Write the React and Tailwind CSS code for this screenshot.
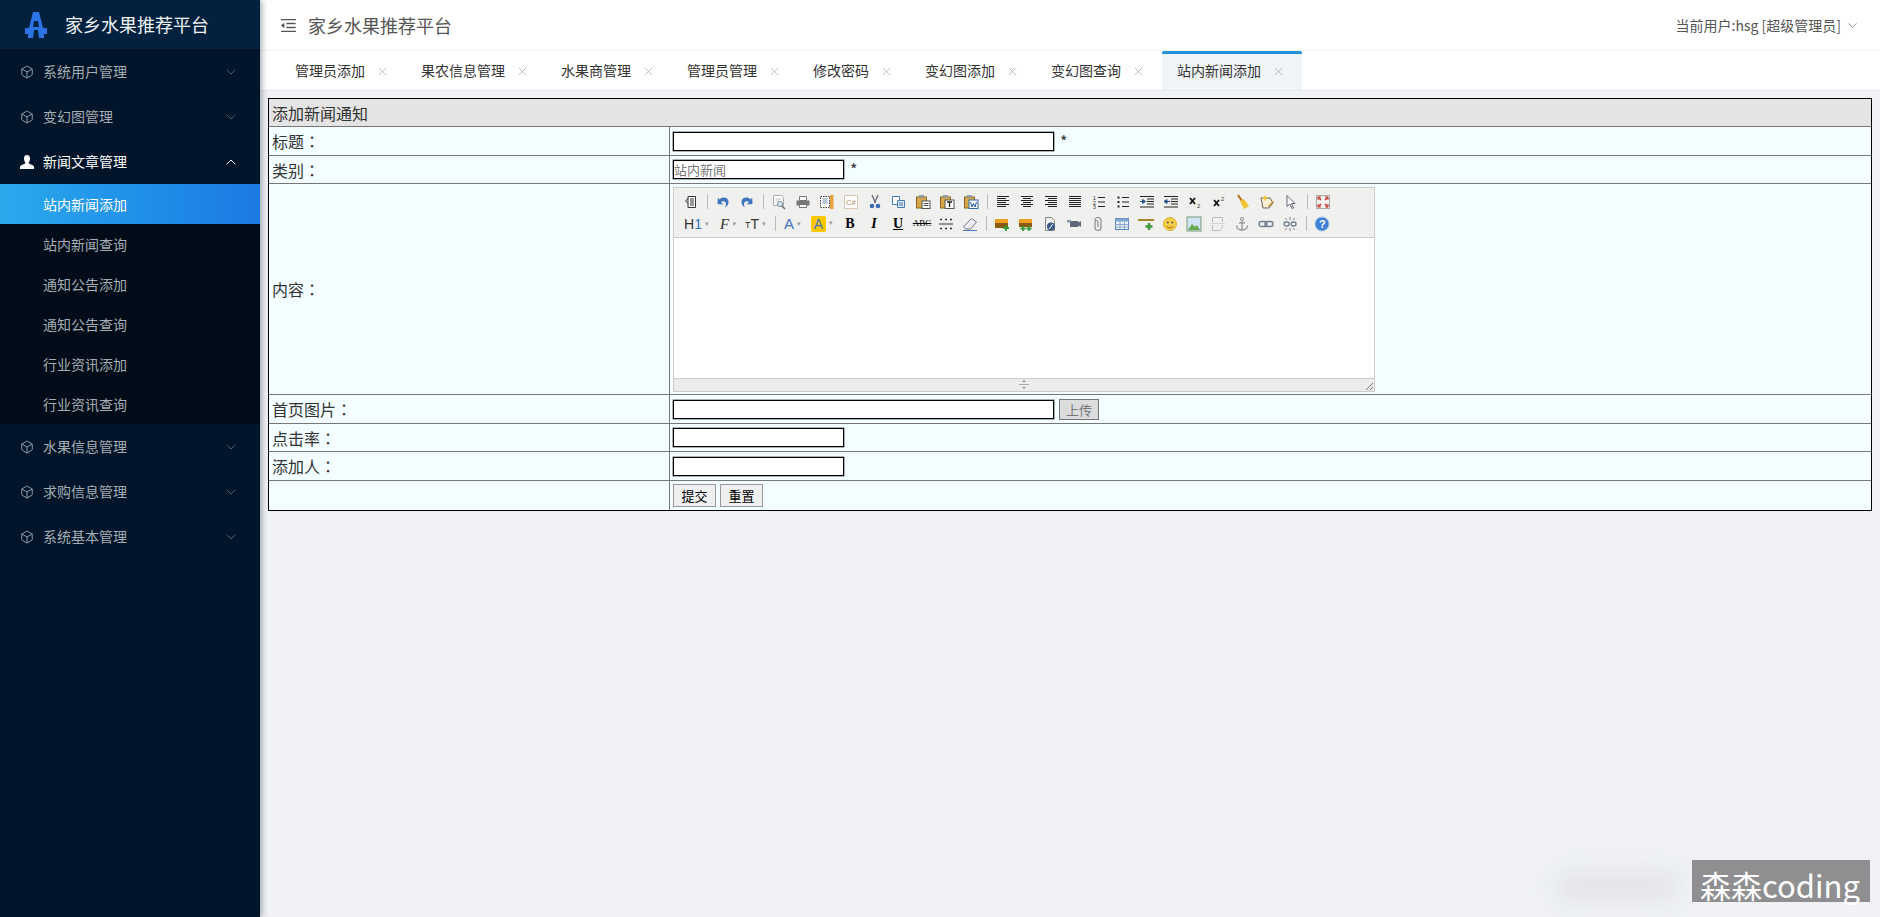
import React from 'react';
import { Box, ChevronDown, ChevronUp, X } from 'lucide-react';
import { AiOutlineMenuFold } from 'react-icons/ai';

const FONT = '"Noto Sans CJK SC", "Noto Sans", sans-serif';

const Lines = ({ rows }) => (
  <svg width="16" height="16" viewBox="0 0 16 16">
    {rows.map((r, i) => (
      <rect key={i} x={r[0]} y={2 + i * 2} width={r[1]} height="1" fill="#222" />
    ))}
  </svg>
);

const Paper = ({ children }) => (
  <svg width="16" height="16" viewBox="0 0 16 16">
    {children}
  </svg>
);

// 编辑器工具栏图标，16x16 画的
const icons = {
  source: (
    <Paper>
      <path d="M5 2.5h7.5v11H5z" fill="#fff" stroke="#333" />
      <path d="M7 5h4M7 7h4M7 9h4M7 11h4" stroke="#333" />
      <path d="M5 4.5L2.500 7 5 9.500" fill="none" stroke="#333" />
    </Paper>
  ),
  undo: (
    <Paper>
      <path d="M4.500 5.500C7 2.500 12.500 3 13.500 7c.5 2.500-1 5-3.500 6.500 1.200-2.500 1.500-5-.5-6-1.500-.7-2.800-.2-3.500.8L8.500 10.500 2.500 10l.3-6.500z" fill="#3f76bd" />
    </Paper>
  ),
  redo: (
    <Paper>
      <path d="M11.500 5.500C9 2.500 3.500 3 2.500 7c-.5 2.500 1 5 3.500 6.500-1.200-2.500-1.500-5 .5-6 1.500-.7 2.800-.2 3.500.8L7.500 10.500l6-.5-.3-6.500z" fill="#3f76bd" />
    </Paper>
  ),
  preview: (
    <Paper>
      <path d="M2.500 1.500h8l2 2v8h-10z" fill="#fff" stroke="#aaa" />
      <path d="M4.500 5h6M4.500 7h3" stroke="#bbb" />
      <circle cx="9" cy="10" r="2.500" fill="#dfe8f2" stroke="#789" />
      <path d="M11 12l3 3" stroke="#667" strokeWidth="1.500" />
    </Paper>
  ),
  print: (
    <Paper>
      <path d="M4.500 2.500h7v4h-7z" fill="#fff" stroke="#777" />
      <rect x="1.500" y="6.500" width="13" height="5" fill="#777" />
      <path d="M4.500 10.500h7v3h-7z" fill="#fff" stroke="#777" />
    </Paper>
  ),
  template: (
    <Paper>
      <path d="M1.500 2.500h9v11h-9z" fill="#fff" stroke="#444" strokeDasharray="1.500 1" />
      <path d="M3.500 5h5M3.500 7h5M3.500 9h5" stroke="#6c8fb8" />
      <rect x="11" y="1" width="3.500" height="14" fill="#e8a33a" />
    </Paper>
  ),
  code: (
    <Paper>
      <path d="M1.500 1.500h13v13h-13z" fill="#fff" stroke="#d8c8b0" />
      <text x="3" y="11" fontSize="7.500" fill="#b08a60" fontFamily="Liberation Sans">C#</text>
    </Paper>
  ),
  cut: (
    <Paper>
      <path d="M5 1l3.500 8M11 1L7.500 9" stroke="#667" strokeWidth="1.300" />
      <circle cx="5" cy="12" r="2.300" fill="#3c6cb4" />
      <circle cx="11" cy="12" r="2.300" fill="#3c6cb4" />
    </Paper>
  ),
  copy: (
    <Paper>
      <path d="M1.500 2.500h7v8h-7z" fill="#fff" stroke="#4a7ab8" />
      <path d="M6.500 6.500h7v7h-7z" fill="#dce8f6" stroke="#4a7ab8" />
      <path d="M8 9h4M8 11h4" stroke="#4a7ab8" />
    </Paper>
  ),
  paste: (
    <Paper>
      <rect x="1.500" y="3" width="10" height="11" fill="#d6a84a" stroke="#8a6a20" />
      <rect x="4" y="1" width="5" height="3" fill="#999" />
      <rect x="7" y="7" width="8" height="7.500" fill="#fff" stroke="#555" />
      <path d="M8.500 9.500h5M8.500 11.500h5" stroke="#555" />
    </Paper>
  ),
  pasteText: (
    <Paper>
      <rect x="1.500" y="3" width="10" height="11" fill="#d6a84a" stroke="#8a6a20" />
      <rect x="4" y="1" width="5" height="3" fill="#999" />
      <rect x="6" y="6" width="9" height="8.500" fill="#fff" stroke="#555" />
      <path d="M8 8h5M10.500 8v5" stroke="#222" strokeWidth="1.300" />
    </Paper>
  ),
  pasteWord: (
    <Paper>
      <rect x="1.500" y="3" width="10" height="11" fill="#d6a84a" stroke="#8a6a20" />
      <rect x="4" y="1" width="5" height="3" fill="#999" />
      <rect x="6" y="6" width="9" height="8.500" fill="#fff" stroke="#346aa8" />
      <path d="M7.500 8l1.500 5 1.500-3.500 1.500 3.500 1.500-5" fill="none" stroke="#23569a" />
    </Paper>
  ),
  left: <Lines rows={[[2, 12], [2, 9], [2, 12], [2, 9], [2, 12], [2, 9]]} />,
  center: <Lines rows={[[2, 12], [4, 8], [2, 12], [4, 8], [2, 12], [4, 8]]} />,
  right: <Lines rows={[[2, 12], [5, 9], [2, 12], [5, 9], [2, 12], [5, 9]]} />,
  full: <Lines rows={[[2, 12], [2, 12], [2, 12], [2, 12], [2, 12], [2, 12]]} />,
  ol: (
    <Paper>
      <path d="M7 3.500h7M7 8h7M7 12.500h7" stroke="#222" />
      <text x="2" y="6" fontSize="5" fill="#222" fontFamily="Liberation Sans">1</text>
      <text x="2" y="10.500" fontSize="5" fill="#222" fontFamily="Liberation Sans">2</text>
      <text x="2" y="15" fontSize="5" fill="#222" fontFamily="Liberation Sans">3</text>
    </Paper>
  ),
  ul: (
    <Paper>
      <path d="M7 3.500h7M7 8h7M7 12.500h7" stroke="#222" />
      <rect x="2.500" y="2.500" width="2" height="2" fill="#222" />
      <rect x="2.500" y="7" width="2" height="2" fill="#222" />
      <rect x="2.500" y="11.500" width="2" height="2" fill="#222" />
    </Paper>
  ),
  indent: (
    <Paper>
      <path d="M1 2.500h14M8 5h7M8 7.500h7M8 10h7M1 13h14" stroke="#222" />
      <path d="M1 7.500h3.500M3.500 5.500l3 2-3 2z" fill="#27508a" stroke="#27508a" />
    </Paper>
  ),
  outdent: (
    <Paper>
      <path d="M1 2.500h14M8 5h7M8 7.500h7M8 10h7M1 13h14" stroke="#222" />
      <path d="M7 7.500H3.500M4 5.500l-3 2 3 2z" fill="#27508a" stroke="#27508a" />
    </Paper>
  ),
  sub: (
    <Paper>
      <path d="M3 4l5 6M8 4l-5 6" stroke="#111" strokeWidth="1.800" />
      <text x="10" y="14" fontSize="6" fill="#444" fontFamily="Liberation Sans">2</text>
    </Paper>
  ),
  sup: (
    <Paper>
      <path d="M3 6l5 6M8 6l-5 6" stroke="#111" strokeWidth="1.800" />
      <text x="10" y="7" fontSize="6" fill="#444" fontFamily="Liberation Sans">2</text>
    </Paper>
  ),
  clear: (
    <Paper>
      <path d="M3 1l4 6" stroke="#b86a10" strokeWidth="2" />
      <path d="M5 7l4-2 5 7-5 3z" fill="#f2c230" />
    </Paper>
  ),
  format: (
    <Paper>
      <path d="M2 4h9l3 5-4 5H4z" fill="#f8f0d0" stroke="#666" />
      <path d="M5 3l1-2 1 2 2 1-2 1-1 2-1-2-2-1z" fill="#f2c230" />
      <path d="M9 12l5-5 1 1-5 5z" fill="#c98a1e" />
    </Paper>
  ),
  select: (
    <Paper>
      <path d="M4 1.500l8 8H8.500l2 4.500-1.500.5-2-4.500L4 12.500z" fill="#fff" stroke="#667" />
    </Paper>
  ),
  fullscreen: (
    <Paper>
      <rect x="1.500" y="1.500" width="13" height="13" fill="#f6f2f2" stroke="#aaa" />
      <path d="M3 3l3 3M13 3l-3 3M3 13l3-3M13 13l-3-3" stroke="#c0392b" strokeWidth="1.500" />
      <path d="M3 6V3h3M13 6V3h-3M3 10v3h3M13 10v3h-3" fill="none" stroke="#c0392b" />
    </Paper>
  ),
  eraser: (
    <Paper>
      <path d="M1.500 11l8-8.500 5 3.500-6 7H4z" fill="#eef0f4" stroke="#778" />
      <path d="M1 14.500h14" stroke="#4a7ab8" />
    </Paper>
  ),
  hrDots: (
    <Paper>
      <path d="M1 8h14" stroke="#333" />
      <path d="M2 3.500h2M7 3.500h2M12 3.500h2M3 2.500v2M8 2.500v2M13 2.500v2M2 12.500h2M7 12.500h2M12 12.500h2M3 11.500v2M8 11.500v2M13 11.500v2" stroke="#333" />
    </Paper>
  ),
  image: (
    <Paper>
      <rect x="1" y="3" width="13" height="9" fill="#8a5a10" />
      <rect x="1" y="3" width="13" height="4" fill="#f0a020" />
      <path d="M12 9v6M9 12h6" stroke="#3a9a3a" strokeWidth="2" />
    </Paper>
  ),
  images: (
    <Paper>
      <rect x="1" y="3" width="13" height="8" fill="#8a5a10" />
      <rect x="1" y="3" width="13" height="4" fill="#f0a020" />
      <path d="M5 10v5M2.500 12.500h5M11 10v5M8.500 12.500h5" stroke="#3a9a3a" strokeWidth="1.800" />
    </Paper>
  ),
  flash: (
    <Paper>
      <path d="M3.500 1.500h6l3 3v10h-9z" fill="#eef0f2" stroke="#888" />
      <circle cx="9" cy="10.500" r="4" fill="#3c5a86" />
      <path d="M7 12.500c2 0 2-4 4-4" fill="none" stroke="#fff" />
    </Paper>
  ),
  video: (
    <Paper>
      <rect x="4" y="5" width="8" height="6" fill="#5d6b78" />
      <rect x="1" y="4" width="4" height="2.500" fill="#8a98a4" />
      <path d="M12 6.500l3-1.500v6l-3-1.500z" fill="#5d6b78" />
    </Paper>
  ),
  attach: (
    <Paper>
      <path d="M5 4.500a3 3 0 016 0v7a3 3 0 01-6 0V6a1.500 1.500 0 013 0v5" fill="none" stroke="#8a8f94" strokeWidth="1.200" />
    </Paper>
  ),
  table: (
    <Paper>
      <rect x="1.500" y="2.500" width="13" height="11" fill="#e8f0fa" stroke="#5a84b8" />
      <rect x="1.500" y="2.500" width="13" height="3" fill="#7ea4d4" />
      <path d="M1.500 8.500h13M1.500 11h13M6 5.500v8M10.500 5.500v8" stroke="#8aa8cc" />
    </Paper>
  ),
  hr: (
    <Paper>
      <rect x="0" y="3" width="16" height="2" fill="#a8862c" />
      <path d="M11 7v7M7.500 10.500h7" stroke="#3a9a3a" strokeWidth="2.400" />
    </Paper>
  ),
  emoji: (
    <Paper>
      <circle cx="8" cy="8" r="6.500" fill="#f5cf4a" stroke="#e0b030" />
      <circle cx="5.800" cy="6.500" r="1" fill="#555" />
      <circle cx="10.200" cy="6.500" r="1" fill="#555" />
      <path d="M4.500 10c2 2.500 5 2.500 7 0" fill="none" stroke="#a06a10" />
    </Paper>
  ),
  map: (
    <Paper>
      <rect x="1" y="1" width="14" height="14" fill="#cfe4f4" stroke="#7a9a7a" />
      <path d="M2 14l4-6 3 3 2-2 3 5z" fill="#6aa84f" />
    </Paper>
  ),
  pagebreak: (
    <Paper>
      <path d="M2.500 6V1.500h10V6M2.500 9v5.500h7l3-3V9" fill="none" stroke="#b8bcc0" />
      <path d="M1 7.500h14" stroke="#d0d4d8" />
    </Paper>
  ),
  anchor: (
    <Paper>
      <circle cx="8" cy="3" r="1.500" fill="none" stroke="#999" strokeWidth="1.200" />
      <path d="M8 4.500V14M5 7h6M2.500 9.500c0 3 3 4.500 5.500 4.500s5.500-1.500 5.500-4.500" fill="none" stroke="#999" strokeWidth="1.400" />
    </Paper>
  ),
  link: (
    <Paper>
      <rect x="1" y="5.500" width="8" height="5" rx="2.500" fill="none" stroke="#6f7f94" strokeWidth="1.400" />
      <rect x="7" y="5.500" width="8" height="5" rx="2.500" fill="none" stroke="#6f7f94" strokeWidth="1.400" />
    </Paper>
  ),
  unlink: (
    <Paper>
      <rect x="2" y="6" width="5" height="4" rx="2" fill="none" stroke="#6f7f94" strokeWidth="1.300" />
      <rect x="9" y="6" width="5" height="4" rx="2" fill="none" stroke="#6f7f94" strokeWidth="1.300" />
      <path d="M8 1v3M8 12v3M3 2l2 2M13 2l-2 2M3 14l2-2M13 14l-2-2" stroke="#888" />
    </Paper>
  ),
  help: (
    <Paper>
      <circle cx="8" cy="8" r="7" fill="#3f7fd6" stroke="#a8c4ec" />
      <text x="5" y="12" fontSize="11" fontWeight="700" fill="#fff" fontFamily="Liberation Sans">?</text>
    </Paper>
  ),
};

const row1 = [
  ['source'], 'sep', ['undo'], ['redo'], 'sep',
  ['preview'], ['print'], ['template'], ['code'], ['cut'], ['copy'], ['paste'], ['pasteText'], ['pasteWord'], 'sep',
  ['left'], ['center'], ['right'], ['full'], ['ol'], ['ul'], ['indent'], ['outdent'], ['sub'], ['sup'], ['clear'], ['format'], ['select'], 'sep',
  ['fullscreen'],
];

const row2Tail = [
  ['eraser'], 'sep',
  ['image'], ['images'], ['flash'], ['video'], ['attach'], ['table'], ['hr'], ['emoji'], ['map'], ['pagebreak'], ['anchor'], ['link'], ['unlink'], 'sep',
  ['help'],
];

const Sep = () => (
  <div className="w-[8px] flex justify-center">
    <div className="w-px h-[15px] bg-[#bbb]" />
  </div>
);

const ToolRow = ({ items }) =>
  items.map((it, i) =>
    it === 'sep' ? (
      <Sep key={i} />
    ) : (
      <div key={i} className="w-[24px] h-[20px] flex items-center justify-center">
        {icons[it[0]]}
      </div>
    )
  );

const Caret = () => <span className="ml-[3px] text-[7px] text-[#999]">▾</span>;

function Editor() {
  return (
    <div className="w-[702px] h-[205px] border border-[#ccc] flex flex-col bg-white">
      <div className="h-[50px] bg-[#f0f0ee] border-b border-[#ccc] pl-[5px] pt-[3px]">
        <div className="flex items-center h-[22px]">
          <ToolRow items={row1} />
        </div>
        <div className="flex items-center h-[22px]">
          <div className="w-[32px] pl-[5px] text-[14px] leading-[20px] text-[#333] flex items-center font-['Liberation_Sans']">
            H<span className="text-[#2b6fc4]">1</span>
            <Caret />
          </div>
          <div className="w-[32px] pl-[9px] flex items-center text-[15px] italic leading-[20px] text-[#333] font-['Liberation_Serif']">
            F
            <Caret />
          </div>
          <div className="w-[28px] pl-[2px] flex items-center leading-[20px] text-[#333] font-['Liberation_Sans']">
            <span className="text-[9px] mt-[3px]">T</span>
            <span className="text-[14px]">T</span>
            <Caret />
          </div>
          <Sep />
          <div className="w-[24px] pl-[5px] flex items-center text-[15px] leading-[20px] text-[#3f76bd] font-['Liberation_Sans']">
            A
            <Caret />
          </div>
          <div className="w-[35px] pl-[8px] flex items-center font-['Liberation_Sans']">
            <span className="w-[15px] h-[16px] bg-[#ffc800] rounded-[2px] text-[14px] leading-[16px] text-center text-[#3f76bd]">A</span>
            <Caret />
          </div>
          <div className="w-[24px] text-center text-[14px] font-bold text-black font-['Liberation_Serif']">B</div>
          <div className="w-[24px] text-center text-[14px] font-bold italic text-black font-['Liberation_Serif']">I</div>
          <div className="w-[24px] text-center text-[14px] font-bold underline text-black font-['Liberation_Serif']">U</div>
          <div className="w-[24px] text-center text-[9px] line-through text-black font-['Liberation_Serif']">ABC</div>
          <div className="w-[24px] h-[20px] flex items-center justify-center">{icons.hrDots}</div>
          <ToolRow items={row2Tail} />
        </div>
      </div>
      <div className="flex-1" />
      <div className="relative h-[13px] bg-[#ececec] border-t border-[#ccc] flex items-center justify-center">
        <svg width="10" height="9" viewBox="0 0 10 9">
          <path d="M5 0L3.500 2h3zM5 9L3.500 7h3z" fill="#777" />
          <path d="M0 4.500h10" stroke="#aaa" />
        </svg>
        <svg className="absolute right-0 bottom-0" width="10" height="10" viewBox="0 0 10 10">
          <path d="M9 2L2 9M9 6L6 9" stroke="#777" />
        </svg>
      </div>
    </div>
  );
}

const inputCls = 'block h-[19px] border border-black ring-[0.5px] ring-black/60 bg-white text-[13px] outline-none';

// 全角冒号用 TC 字形，才是居中的
const Colon = () => <span className="font-['Noto_Sans_CJK_TC']">：</span>;

const Row = ({ label, h, children }) => (
  <tr className={h}>
    <td className="border border-[#777] px-[3px] py-0 text-[16px] text-[#333] align-middle">
      {label}
      {label && <Colon />}
    </td>
    <td className="border border-[#777] px-[3px] py-0 text-[14px] text-[#333] align-middle">{children}</td>
  </tr>
);

const subMenus = ['站内新闻添加', '站内新闻查询', '通知公告添加', '通知公告查询', '行业资讯添加', '行业资讯查询'];
const tabs = ['管理员添加', '果农信息管理', '水果商管理', '管理员管理', '修改密码', '变幻图添加', '变幻图查询', '站内新闻添加'];

const MenuRow = ({ label }) => (
  <div className="h-[45px] flex items-center pl-[20px] pr-[21px] text-[14px] text-[#a6adb4]">
    <Box size={14} strokeWidth={1.5} className="mr-[9px] shrink-0" />
    <span className="flex-1">{label}</span>
    <ChevronDown size={16} strokeWidth={1} className="text-[#7a8794]" />
  </div>
);

function Sidebar() {
  return (
    <aside className="w-[260px] shrink-0 h-full bg-[#001529] flex flex-col z-10 shadow-[2px_0_6px_rgba(0,21,41,0.35)]">
      <div className="h-[49px] bg-[#02213f] flex items-center pl-[25px]">
        <svg width="22" height="26" viewBox="0 0 22 26" className="shrink-0">
          <path fillRule="evenodd" d="M8 0h6l2 8 2 8h4v6h-3v4h-5l-1-8H9l-1 8H3v-4H0v-6h4l2-8zM9 9l-1 6h6l-1-6z" fill="#2b74e6" />
        </svg>
        <span className="ml-[18px] text-[18px] text-[#f0f3f6]">家乡水果推荐平台</span>
      </div>
      <MenuRow label="系统用户管理" />
      <MenuRow label="变幻图管理" />
      <div className="h-[45px] flex items-center pl-[20px] pr-[21px] text-[14px] text-white">
        <svg width="14" height="14" viewBox="0 0 14 14" className="mr-[9px] shrink-0">
          <path d="M7 0c2 0 3 1.500 3 3.500S9 7 8.500 8c.5 1 5.500 2 5.500 4v2H0v-2c0-2 5-3 5.500-4C5 7 4 5.500 4 3.500S5 0 7 0z" fill="#fff" />
        </svg>
        <span className="flex-1">新闻文章管理</span>
        <ChevronUp size={16} strokeWidth={1.5} />
      </div>
      <div className="bg-[#000c17]">
        {subMenus.map((m, i) => (
          <div
            key={m}
            className={
              i === 0
                ? 'h-[40px] flex items-center pl-[43px] text-[14px] text-white bg-gradient-to-r from-[#2ba9ee] to-[#1b79e2]'
                : 'h-[40px] flex items-center pl-[43px] text-[14px] text-[#a6adb4]'
            }
          >
            {m}
          </div>
        ))}
      </div>
      <MenuRow label="水果信息管理" />
      <MenuRow label="求购信息管理" />
      <MenuRow label="系统基本管理" />
    </aside>
  );
}

export default function App() {
  return (
    <div className="relative h-screen w-full flex overflow-hidden bg-[#f0f2f5]" style={{ fontFamily: FONT }}>
      <Sidebar />
      <main className="flex-1 min-w-0 flex flex-col">
        <header className="h-[51px] bg-white border-b border-[#f5f5f5] flex items-center pl-[19px] pr-[20px]">
          <AiOutlineMenuFold size={19} className="text-[#555]" />
          <span className="ml-[10px] text-[18px] text-[#555]">家乡水果推荐平台</span>
          <span className="ml-auto text-[14px] text-[#555]">当前用户:hsg [超级管理员]</span>
          <ChevronDown size={15} strokeWidth={1} className="ml-[4px] text-[#555]" />
        </header>
        <nav className="h-[40px] bg-white border-b border-[#e6e8eb] flex pl-[20px]">
          {tabs.map((t, i) => {
            const active = i === tabs.length - 1;
            return (
              <div
                key={t}
                className={
                  active
                    ? 'pl-[15px] pr-[19px] pb-[3px] flex items-center text-[14px] text-[#333] bg-[#f0f3f8] border-t-[3px] border-[#2490de] rounded-t-[2px]'
                    : 'pl-[15px] pr-[19px] flex items-center text-[14px] text-[#333]'
                }
              >
                <span>{t}</span>
                <X size={13} strokeWidth={1} className="ml-[11px] mr-[-2px] mt-[1px] text-[#888]" />
              </div>
            );
          })}
        </nav>
        <div className="flex-1 pt-[7px] px-[8px]">
          <table className="w-full border-collapse table-fixed bg-[#f2feff] outline outline-1 outline-black -outline-offset-1">
            <colgroup>
              <col className="w-[401px]" />
              <col />
            </colgroup>
            <tbody>
              <tr className="h-[28px]">
                <td colSpan={2} className="border border-[#777] bg-[#e4e4e4] px-[3px] py-0 text-[16px] text-[#333]">
                  添加新闻通知
                </td>
              </tr>
              <Row label="标题" h="h-[29px]">
                <div className="flex items-center">
                  <input className={`${inputCls} w-[381px]`} />
                  <span className="ml-[6px] text-[16px] leading-[19px]">*</span>
                </div>
              </Row>
              <Row label="类别" h="h-[28px]">
                <div className="flex items-center">
                  <input readOnly value="站内新闻" className={`${inputCls} w-[171px] text-[#777]`} />
                  <span className="ml-[6px] text-[16px] leading-[19px]">*</span>
                </div>
              </Row>
              <Row label="内容" h="h-[211px]">
                <Editor />
              </Row>
              <Row label="首页图片" h="h-[29px]">
                <div className="flex items-center">
                  <input className={`${inputCls} w-[381px]`} />
                  <button className="ml-[5px] w-[40px] h-[21px] bg-[#dcdcdc] border border-[#777] text-[13px] leading-[19px] text-[#777]">上传</button>
                </div>
              </Row>
              <Row label="点击率" h="h-[28px]">
                <input className={`${inputCls} w-[171px]`} />
              </Row>
              <Row label="添加人" h="h-[29px]">
                <input className={`${inputCls} w-[171px]`} />
              </Row>
              <Row label="" h="h-[30px]">
                <div className="flex items-center gap-[4px]">
                  <button className="w-[43px] h-[23px] bg-[#efefef] border border-[#999] text-[13px] leading-[21px] text-black">提交</button>
                  <button className="w-[43px] h-[23px] bg-[#efefef] border border-[#999] text-[13px] leading-[21px] text-black">重置</button>
                </div>
              </Row>
            </tbody>
          </table>
        </div>
      </main>

      {/* 右下角水印 */}
      <div className="absolute left-[1555px] top-[872px] w-[125px] h-[28px] rounded-full bg-[#e2e3e6] blur-md" />
      <div className="absolute left-[1692px] top-[860px] w-[178px] h-[42px] bg-[#8f8f91] text-[31px] leading-[50px] pl-[8px] text-white whitespace-nowrap">
        森森coding
      </div>
    </div>
  );
}
